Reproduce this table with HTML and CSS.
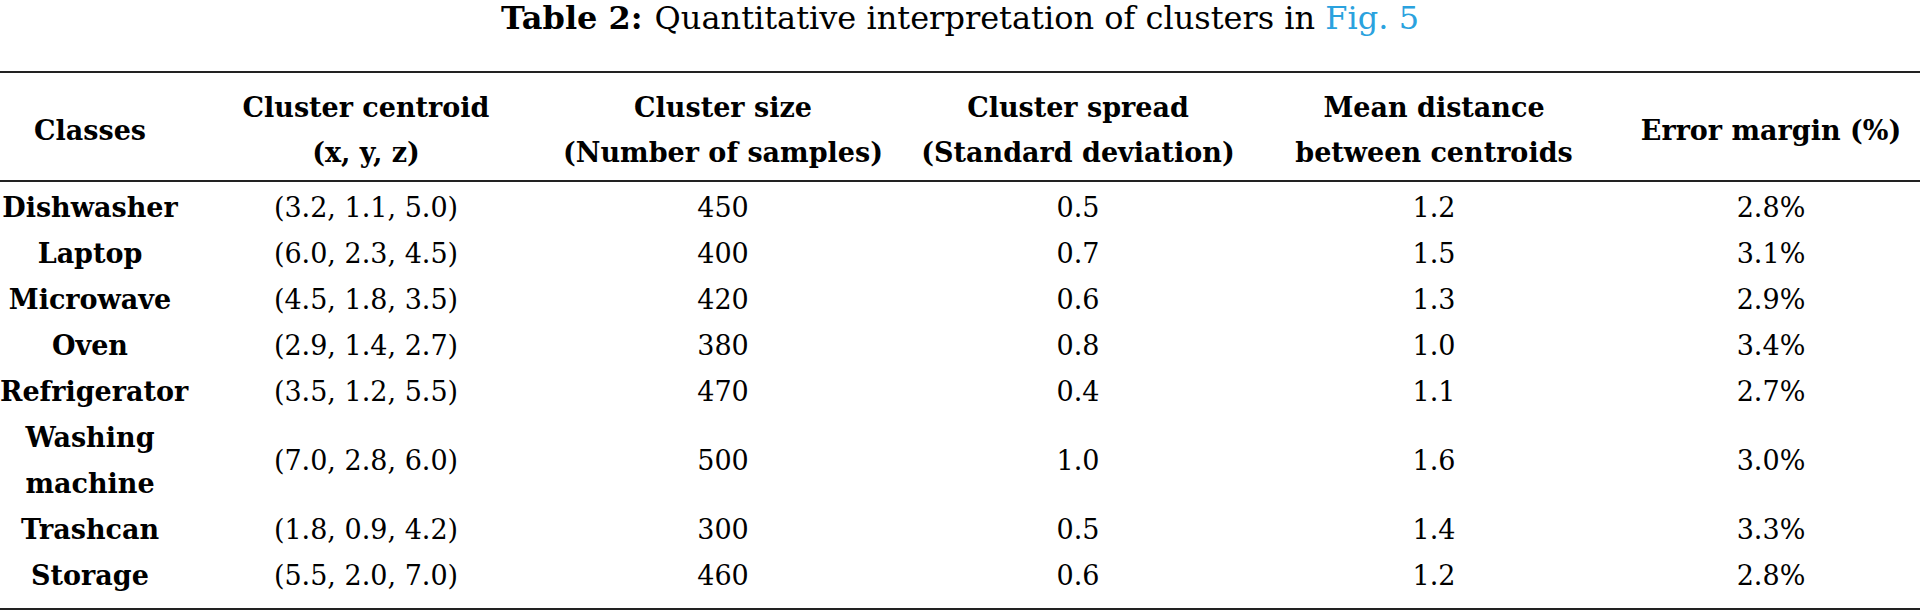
FILE: index.html
```html
<!DOCTYPE html>
<html lang="en">
<head>
<meta charset="utf-8">
<title>Table 2</title>
<link rel="stylesheet" href="styles.css">
</head>
<body>
<div class="caption"><span class="cap-label">Table 2:</span><span class="cap-gap"></span>Quantitative interpretation of clusters in <a class="ref" href="#fig5">Fig. 5</a></div>
<table class="data">
  <colgroup>
    <col class="c1"><col class="c2"><col class="c3"><col class="c4"><col class="c5"><col class="c6">
  </colgroup>
  <thead>
    <tr>
      <th>Classes</th>
      <th>Cluster centroid<br>(x, y, z)</th>
      <th>Cluster size<br>(Number of samples)</th>
      <th>Cluster spread<br>(Standard deviation)</th>
      <th>Mean distance<br>between centroids</th>
      <th class="last">Error margin (%)</th>
    </tr>
  </thead>
  <tbody>
    <tr><td class="cls">Dishwasher</td><td>(3.2, 1.1, 5.0)</td><td>450</td><td>0.5</td><td>1.2</td><td class="last">2.8%</td></tr>
    <tr><td class="cls">Laptop</td><td>(6.0, 2.3, 4.5)</td><td>400</td><td>0.7</td><td>1.5</td><td class="last">3.1%</td></tr>
    <tr><td class="cls">Microwave</td><td>(4.5, 1.8, 3.5)</td><td>420</td><td>0.6</td><td>1.3</td><td class="last">2.9%</td></tr>
    <tr><td class="cls">Oven</td><td>(2.9, 1.4, 2.7)</td><td>380</td><td>0.8</td><td>1.0</td><td class="last">3.4%</td></tr>
    <tr><td class="cls">Refrigerator</td><td>(3.5, 1.2, 5.5)</td><td>470</td><td>0.4</td><td>1.1</td><td class="last">2.7%</td></tr>
    <tr><td class="cls wrap">Washing<br>machine</td><td>(7.0, 2.8, 6.0)</td><td>500</td><td>1.0</td><td>1.6</td><td class="last">3.0%</td></tr>
    <tr><td class="cls">Trashcan</td><td>(1.8, 0.9, 4.2)</td><td>300</td><td>0.5</td><td>1.4</td><td class="last">3.3%</td></tr>
    <tr><td class="cls">Storage</td><td>(5.5, 2.0, 7.0)</td><td>460</td><td>0.6</td><td>1.2</td><td class="last">2.8%</td></tr>
  </tbody>
</table>
</body>
</html>
```
FILE: styles.css
```css
html, body {
  margin: 0;
  padding: 0;
  background: #ffffff;
}

body {
  width: 1920px;
  height: 611px;
  overflow: hidden;
  font-family: "DejaVu Serif", "Liberation Serif", serif;
  color: #000000;
}

.caption {
  font-size: 32px;
  line-height: 37px;
  text-align: center;
  margin-bottom: 34px;
  white-space: nowrap;
}

.cap-label {
  font-weight: bold;
}

.cap-gap {
  display: inline-block;
  width: 12px;
}

.ref {
  color: #2aa2de;
  text-decoration: none;
}

.data {
  width: 1920px;
  table-layout: fixed;
  border-collapse: separate;
  border-spacing: 0;
  font-size: 27px;
}

.c1 { width: 180px; }
.c2 { width: 372px; }
.c3 { width: 342px; }
.c4 { width: 368px; }
.c5 { width: 344px; }
.c6 { width: 314px; }

.data th {
  font-weight: bold;
  line-height: 45px;
  padding: 12px 0 5px 0;
  border-top: 2px solid #222222;
  border-bottom: 2px solid #222222;
  text-align: center;
  vertical-align: middle;
  white-space: nowrap;
}

.data td {
  line-height: 46px;
  padding: 0;
  text-align: center;
  vertical-align: middle;
  white-space: nowrap;
}

.data .last {
  padding-left: 16px;
}

.data td.cls {
  font-weight: bold;
}

.data tbody tr:first-child td {
  padding-top: 3px;
}

.data tbody tr:last-child td {
  padding-bottom: 9px;
  border-bottom: 2px solid #222222;
}
```
